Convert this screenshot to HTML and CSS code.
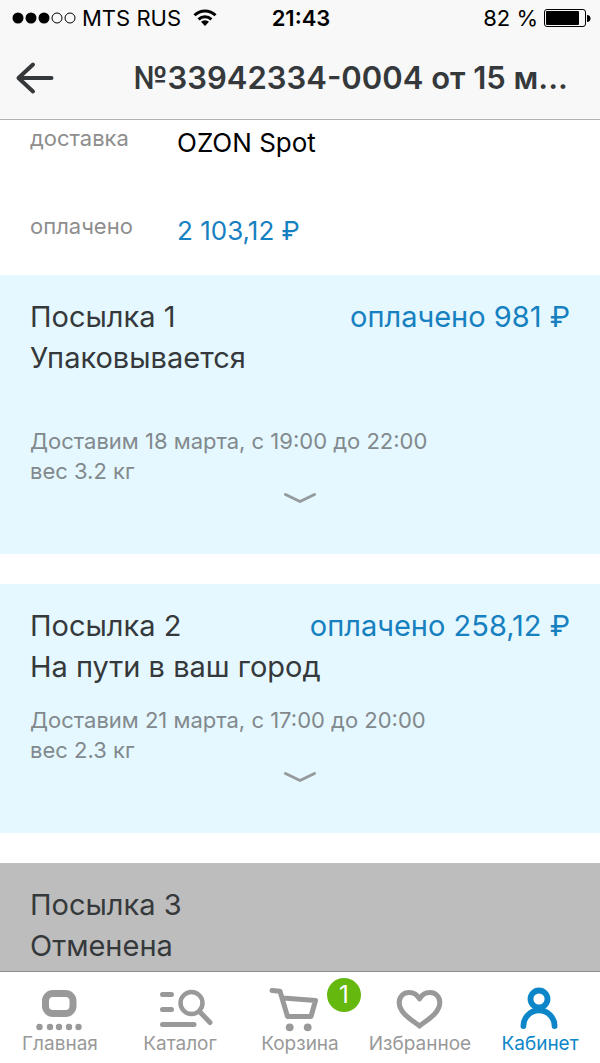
FILE: index.html
```html
<!DOCTYPE html>
<html lang="ru">
<head>
<meta charset="utf-8">
<meta name="viewport" content="width=device-width, initial-scale=1">
<title>Заказ №33942334-0004</title>
<link rel="stylesheet" href="styles.css">
</head>
<body>
<div class="app">
  <header class="header">
    <div class="status">
      <div class="status-left">
        <svg class="signal" viewBox="0 0 64 12" aria-hidden="true">
          <circle cx="6" cy="6" r="5.5"/><circle cx="19" cy="6" r="5.5"/><circle cx="32" cy="6" r="5.5"/>
          <circle class="ring" cx="45" cy="6" r="5"/><circle class="ring" cx="58" cy="6" r="5"/>
        </svg>
        <span>MTS RUS</span>
        <svg class="wifi" viewBox="0 0 24 18" aria-hidden="true">
          <path class="arc" d="M1.5 6.2a15 15 0 0 1 21 0M5.6 10.3a9.2 9.2 0 0 1 12.8 0"/>
          <path d="M8 12.8a5.8 5.8 0 0 1 8 0L12 17z"/>
        </svg>
      </div>
      <time class="clock">21:43</time>
      <div class="status-right">
        <span>82 %</span>
        <svg class="battery" viewBox="0 0 46 18" aria-hidden="true">
          <rect class="case" x="0.5" y="0.5" width="41" height="17" rx="2.5"/>
          <rect x="2" y="2" width="33" height="14" rx="1"/>
          <path d="M43 6a3 3 0 0 1 0 7z"/>
        </svg>
      </div>
    </div>
    <div class="nav">
      <button class="back" type="button" aria-label="Назад">
        <svg viewBox="0 0 38 32" aria-hidden="true"><path d="M35.5 16H2.5M17 2.500L2.500 16L17 29.500"/></svg>
      </button>
      <h1 class="title">№33942334-0004 от 15 м...</h1>
    </div>
  </header>

  <main class="content">
    <dl class="details">
      <dt>доставка</dt><dd>OZON Spot</dd>
      <dt>оплачено</dt><dd class="price">2 103,12 ₽</dd>
    </dl>

    <section class="parcel parcel-tall">
      <div class="parcel-head"><h2>Посылка 1</h2><span class="price">оплачено 981 ₽</span></div>
      <p class="state">Упаковывается</p>
      <p class="info">Доставим 18 марта, с 19:00 до 22:00<br>вес 3.2 кг</p>
      <button class="expand" type="button" aria-label="Развернуть посылку 1">
        <svg viewBox="0 0 34 12" aria-hidden="true"><path d="M2.500 2.500L17 9.500L31.500 2.500"/></svg>
      </button>
    </section>

    <section class="parcel">
      <div class="parcel-head"><h2>Посылка 2</h2><span class="price">оплачено 258,12 ₽</span></div>
      <p class="state">На пути в ваш город</p>
      <p class="info">Доставим 21 марта, с 17:00 до 20:00<br>вес 2.3 кг</p>
      <button class="expand" type="button" aria-label="Развернуть посылку 2">
        <svg viewBox="0 0 34 12" aria-hidden="true"><path d="M2.500 2.500L17 9.500L31.500 2.500"/></svg>
      </button>
    </section>

    <section class="parcel parcel-cancelled">
      <div class="parcel-head"><h2>Посылка 3</h2></div>
      <p class="state">Отменена</p>
    </section>
  </main>

  <nav class="tabs">
    <a class="tab" href="#home">
      <svg viewBox="0 0 60 44" aria-hidden="true">
        <rect class="line" x="15.500" y="6.500" width="27.500" height="20" rx="7.500" stroke-width="7"/>
        <g class="fill"><circle cx="9.500" cy="40" r="3.200"/><circle cx="20" cy="40" r="3.200"/><circle cx="29" cy="40" r="3.200"/><circle cx="39" cy="40" r="3.200"/><circle cx="48.500" cy="40" r="3.200"/></g>
      </svg>
      <span>Главная</span>
    </a>
    <a class="tab" href="#catalog">
      <svg viewBox="0 0 60 44" aria-hidden="true">
        <path class="line" stroke-width="5" d="M12.500 7.500H21.500M12.500 22.500H21.500M12.500 37.500H44"/>
        <circle class="line" stroke-width="4.500" cx="41.500" cy="16" r="11"/>
        <path class="line" stroke-width="5" d="M49.500 24.500L60 35.500"/>
      </svg>
      <span>Каталог</span>
    </a>
    <a class="tab" href="#cart">
      <svg viewBox="0 0 60 44" aria-hidden="true">
        <path class="line" stroke-width="5" d="M2 3.500L10 4.300L17.500 29.500H41L45.500 13.500L13 11"/>
        <g class="fill"><circle cx="19.700" cy="40.300" r="3.900"/><circle cx="37.700" cy="40.300" r="3.900"/></g>
      </svg>
      <span>Корзина</span>
      <b class="badge">1</b>
    </a>
    <a class="tab" href="#favourites">
      <svg viewBox="0 0 60 44" aria-hidden="true">
        <path class="line" stroke-width="5" d="M29.500 39C25.500 35 9.200 27.500 9.200 15.500C9.200 9.500 13.500 5.500 19 5.500C24 5.500 27.500 8 29.500 12C31.500 8 35 5.500 40 5.500C45.500 5.500 49.800 9.500 49.800 15.500C49.800 27.500 33.500 35 29.500 39Z"/>
      </svg>
      <span>Избранное</span>
    </a>
    <a class="tab tab-active" href="#account" aria-current="page">
      <svg viewBox="0 0 60 44" aria-hidden="true">
        <circle class="line" stroke-width="5.800" cx="29" cy="12" r="8.500"/>
        <path class="line" stroke-width="5.800" d="M13.400 39A15.600 15.600 0 0 1 44.600 39"/>
      </svg>
      <span>Кабинет</span>
    </a>
  </nav>
</div>
</body>
</html>
```
FILE: styles.css
```css
* { box-sizing: border-box; }

body {
  margin: 0;
  background: #fff;
  color: #35393b;
  font-family: Inter, "Noto Sans", sans-serif;
}

h1, h2, p, dl, dd { margin: 0; font-weight: 400; }

button { padding: 0; border: 0; background: none; color: inherit; cursor: pointer; }

svg { display: block; overflow: visible; }

.app { display: flex; flex-direction: column; height: 100vh; }

/* Header */
.header { flex: none; background: #f8f8f8; border-bottom: 1px solid #b2b2b2; }

.status {
  display: grid;
  grid-template-columns: 1fr auto 1fr;
  align-items: center;
  height: 36px;
  padding: 0 10px 0 12px;
  color: #000;
  font-size: 22px;
}
.status-left, .status-right { display: flex; align-items: center; gap: 6px; white-space: nowrap; }
.status-right { justify-content: flex-end; }
.signal { width: 64px; height: 12px; }
.ring { fill: none; stroke: #000; }
.wifi { width: 24px; height: 18px; margin-left: 6px; }
.arc { fill: none; stroke: #000; stroke-width: 3; }
.battery { width: 46px; height: 18px; }
.case { fill: none; stroke: #000; }
.clock { font-weight: 600; }

.nav { display: flex; align-items: center; height: 83px; padding: 0 32px 0 16px; }
.back svg { width: 38px; height: 32px; }
.back path { fill: none; stroke: #35393b; stroke-width: 4; stroke-linecap: round; stroke-linejoin: round; }
.title { flex: 1; text-align: right; font-size: 31px; font-weight: 600; white-space: nowrap; }

/* Order content */
.content { flex: 1; min-height: 0; overflow: hidden; }

.details {
  display: grid;
  grid-template-columns: 147px 1fr;
  grid-template-rows: 88px 67px;
  padding: 0 30px;
  line-height: 30px;
}
.details dt { padding-top: 3px; color: #8e8e8e; font-size: 22px; }
.details dd { padding-top: 8px; color: #000; font-size: 26px; }
.price, .details .price { color: #1680c0; }

.parcel { padding: 21px 30px 50px; margin-bottom: 30px; background: #e5f8ff; }
.parcel-head { display: flex; justify-content: space-between; }
.parcel-head, .parcel h2, .state { font-size: 29px; line-height: 41px; }
.info { margin-top: 18px; color: #82898d; font-size: 22px; line-height: 30px; }
.parcel-tall .info { margin-top: 48px; }
.expand { display: block; margin: 6px auto 0; }
.expand svg { width: 34px; height: 12px; }
.expand path { fill: none; stroke: #959a9d; stroke-width: 3; stroke-linecap: round; stroke-linejoin: round; }
.parcel-cancelled { background: #bdbdbd; }

/* Tab bar */
.tabs {
  flex: none;
  display: grid;
  grid-template-columns: repeat(5, 1fr);
  height: 92px;
  padding-top: 15px;
  background: #fff;
  border-top: 1px solid #8e8e8e;
}
.tab {
  position: relative;
  display: flex;
  flex-direction: column;
  align-items: center;
  color: #999;
  font-size: 19px;
  line-height: 26px;
  text-decoration: none;
}
.tab svg { width: 60px; height: 44px; }
.line { fill: none; stroke: currentColor; stroke-linecap: round; stroke-linejoin: round; }
.fill { fill: currentColor; }
.tab-active { color: #0c86c8; }
.badge {
  position: absolute;
  top: -9px;
  left: 87px;
  width: 34px;
  height: 34px;
  border-radius: 50%;
  background: #65b80d;
  color: #fff;
  font-size: 24px;
  font-weight: 400;
  line-height: 34px;
  text-align: center;
}
```
